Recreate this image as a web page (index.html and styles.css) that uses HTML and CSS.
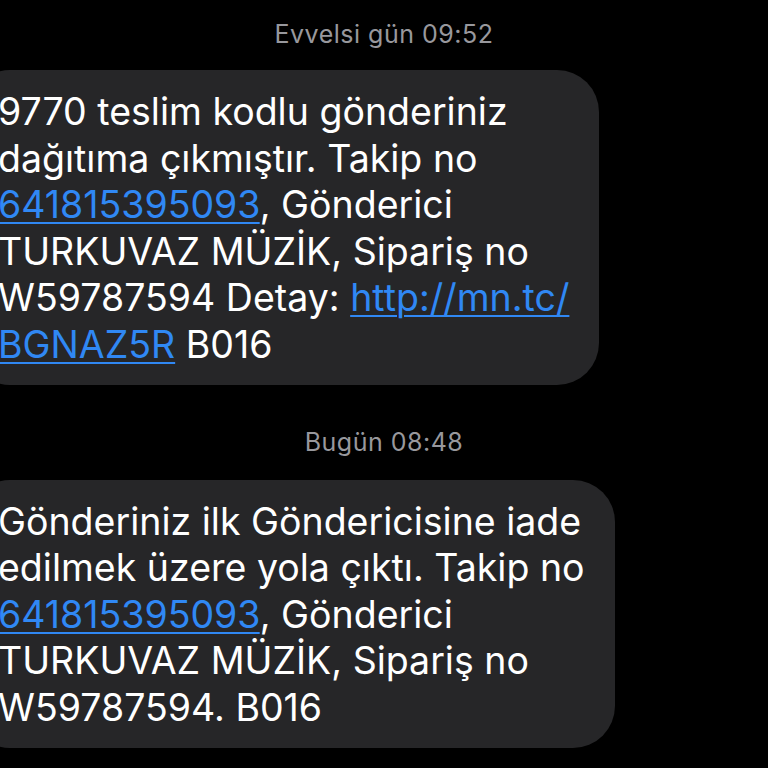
FILE: index.html
```html
<!DOCTYPE html>
<html lang="tr">
<head>
    <meta charset="UTF-8">
    <meta name="viewport" content="width=device-width, initial-scale=1.0">
    <title>Mesajlar</title>
    <link rel="stylesheet" href="styles.css">
</head>
<body>

    <div class="thread">
        <!-- first message -->
        <div class="stamp">Evvelsi gün 09:52</div>
        <div class="bubble">
            9770 teslim kodlu gönderiniz<br>
            dağıtıma çıkmıştır. Takip no<br>
            <a href="#">641815395093</a>, Gönderici<br>
            TURKUVAZ MÜZİK, Sipariş no<br>
            W59787594 Detay: <a href="#">http://mn.tc/<br>BGNAZ5R</a> B016
        </div>

        <!-- second message -->
        <div class="stamp stamp-today">Bugün 08:48</div>
        <div class="bubble">
            Gönderiniz ilk Göndericisine iade<br>
            edilmek üzere yola çıktı. Takip no<br>
            <a href="#">641815395093</a>, Gönderici<br>
            TURKUVAZ MÜZİK, Sipariş no<br>
            W59787594. B016
        </div>
    </div>

</body>
</html>
```

FILE: styles.css
```css
body {
    background-color: #000;
    margin: 0;
    padding: 0;
    font-family: Inter, "Noto Sans", sans-serif;
    overflow: hidden;
}
.thread {
    display: flex;
    flex-direction: column;
    align-items: flex-start;
    padding-top: 21px;
}
.stamp {
    align-self: stretch;
    text-align: center;
    color: #98989d;
    font-size: 25px;
    letter-spacing: 0.5px;
    line-height: 26px;
    margin-bottom: 23px;
}
.stamp-today {
    margin-top: 44px;
    margin-bottom: 25px;
}
.bubble {
    background-color: #262628;
    color: #fff;
    font-size: 37.5px;
    line-height: 46.6px;
    border-radius: 42px;
    margin-left: -32px;
    padding: 19px 30px 16px 30px;
}
.bubble a {
    color: #3088f4;
    text-decoration: underline;
    text-decoration-thickness: 2px;
    text-underline-offset: 4px;
}
```
